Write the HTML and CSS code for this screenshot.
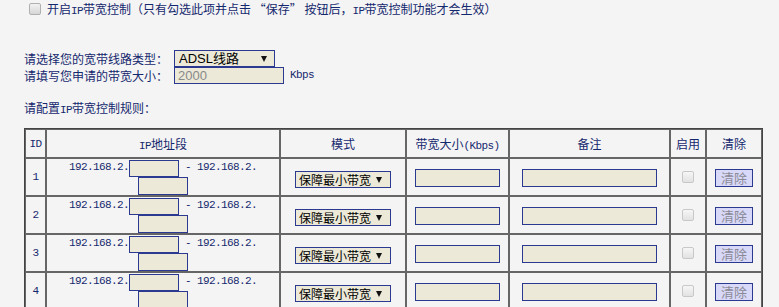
FILE: index.html
```html
<!DOCTYPE html>
<html lang="zh-CN">
<head>
<meta charset="utf-8">
<title>IP带宽控制</title>
<link rel="stylesheet" href="styles.css">
</head>
<body>
<div class="page">
  <div class="enable-row">
    <input type="checkbox" class="chk">
    <span>开启<span class="en">IP</span>带宽控制（只有勾选此项并点击 “保存” 按钮后，<span class="en">IP</span>带宽控制功能才会生效）</span>
  </div>

  <div class="line-form">
    <div class="lbl">请选择您的宽带线路类型：</div>
    <div class="sel sel-line"><select><option>ADSL线路</option></select><span class="arrow"></span></div>
    <div></div>
    <div class="lbl">请填写您申请的带宽大小：</div>
    <input class="field field-total" type="text" value="2000" disabled>
    <div class="unit en">Kbps</div>
  </div>

  <div class="section-title">请配置<span class="en">IP</span>带宽控制规则：</div>

  <table class="rules">
    <colgroup>
      <col class="c-id"><col class="c-ip"><col class="c-mode"><col class="c-bw"><col class="c-note"><col class="c-en"><col class="c-clr">
    </colgroup>
    <thead>
      <tr>
        <th class="en">ID</th>
        <th><span class="en">IP</span>地址段</th>
        <th>模式</th>
        <th>带宽大小<span class="en">(Kbps)</span></th>
        <th>备注</th>
        <th>启用</th>
        <th>清除</th>
      </tr>
    </thead>
    <tbody>
      <tr>
        <td class="en">1</td>
        <td class="ip-cell">
          <div class="ip-line"><span class="en">192.168.2.</span><input class="field ip-in" type="text"><span class="en">&nbsp;-&nbsp;192.168.2.</span></div>
          <div class="ip-line"><input class="field ip-in" type="text"></div>
        </td>
        <td><div class="sel sel-mode"><select><option>保障最小带宽</option></select><span class="arrow"></span></div></td>
        <td><input class="field bw-in" type="text"></td>
        <td><input class="field note-in" type="text"></td>
        <td><input type="checkbox" class="chk chk-dis" disabled></td>
        <td><button class="clr-btn" disabled>清除</button></td>
      </tr>
      <tr>
        <td class="en">2</td>
        <td class="ip-cell">
          <div class="ip-line"><span class="en">192.168.2.</span><input class="field ip-in" type="text"><span class="en">&nbsp;-&nbsp;192.168.2.</span></div>
          <div class="ip-line"><input class="field ip-in" type="text"></div>
        </td>
        <td><div class="sel sel-mode"><select><option>保障最小带宽</option></select><span class="arrow"></span></div></td>
        <td><input class="field bw-in" type="text"></td>
        <td><input class="field note-in" type="text"></td>
        <td><input type="checkbox" class="chk chk-dis" disabled></td>
        <td><button class="clr-btn" disabled>清除</button></td>
      </tr>
      <tr>
        <td class="en">3</td>
        <td class="ip-cell">
          <div class="ip-line"><span class="en">192.168.2.</span><input class="field ip-in" type="text"><span class="en">&nbsp;-&nbsp;192.168.2.</span></div>
          <div class="ip-line"><input class="field ip-in" type="text"></div>
        </td>
        <td><div class="sel sel-mode"><select><option>保障最小带宽</option></select><span class="arrow"></span></div></td>
        <td><input class="field bw-in" type="text"></td>
        <td><input class="field note-in" type="text"></td>
        <td><input type="checkbox" class="chk chk-dis" disabled></td>
        <td><button class="clr-btn" disabled>清除</button></td>
      </tr>
      <tr>
        <td class="en">4</td>
        <td class="ip-cell">
          <div class="ip-line"><span class="en">192.168.2.</span><input class="field ip-in" type="text"><span class="en">&nbsp;-&nbsp;192.168.2.</span></div>
          <div class="ip-line"><input class="field ip-in" type="text"></div>
        </td>
        <td><div class="sel sel-mode"><select><option>保障最小带宽</option></select><span class="arrow"></span></div></td>
        <td><input class="field bw-in" type="text"></td>
        <td><input class="field note-in" type="text"></td>
        <td><input type="checkbox" class="chk chk-dis" disabled></td>
        <td><button class="clr-btn" disabled>清除</button></td>
      </tr>
    </tbody>
  </table>
</div>
</body>
</html>
```

FILE: styles.css
```css
html, body {
  margin: 0;
  padding: 0;
  background: #f4f4f4;
}

body {
  font-family: "Noto Sans CJK SC", "Liberation Sans", sans-serif;
  font-size: 12px;
  color: #14286e;
}

.page {
  padding-left: 24px;
}

.en {
  font-family: "Liberation Mono", "DejaVu Sans Mono", monospace;
  font-size: 11px;
  letter-spacing: -0.6px;
}

.enable-row {
  height: 17px;
  display: flex;
  align-items: center;
  padding-left: 5px;
  white-space: nowrap;
}

.chk {
  -webkit-appearance: none;
  appearance: none;
  width: 12px;
  height: 12px;
  margin: 0 6px 0 0;
  border: 1px solid #b0b0b0;
  border-radius: 2px;
  background: linear-gradient(#f2f2f2, #d6d6d6);
  box-sizing: border-box;
}

.chk-dis {
  margin: 0;
  border-color: #c8c8c8;
  background: linear-gradient(#f6f6f6, #e2e2e2);
}

.line-form {
  margin-top: 33px;
  display: grid;
  grid-template-columns: 150px auto 1fr;
  grid-template-rows: 17px 17px;
  align-items: center;
}

.lbl {
  line-height: 17px;
}

.field {
  box-sizing: border-box;
  border: 1px solid #2b3990;
  background: #ece9d8;
  margin: 0;
  padding: 0 3px;
  font-family: "Liberation Sans", "Noto Sans CJK SC", sans-serif;
  font-size: 12px;
  color: #000;
  outline: none;
}

.field-total {
  width: 110px;
  height: 17px;
  color: #8a8a8a;
  font-size: 13px;
}

.unit {
  padding-left: 6px;
  line-height: 17px;
}

.sel {
  box-sizing: border-box;
  display: flex;
  align-items: center;
  border: 1px solid #2b3990;
  background: #ece9d8;
}

.sel select {
  -webkit-appearance: none;
  appearance: none;
  flex: 1;
  min-width: 0;
  border: 0;
  background: transparent;
  margin: 0;
  padding: 0 0 0 4px;
  font-family: "Liberation Sans", "Noto Sans CJK SC", sans-serif;
  font-size: 13px;
  color: #000;
  outline: none;
  height: 15px;
  line-height: 15px;
}

.arrow {
  width: 0;
  height: 0;
  border-left: 3px solid transparent;
  border-right: 3px solid transparent;
  border-top: 6px solid #111;
  margin-right: 7px;
}

.sel-line {
  width: 101px;
  height: 17px;
}

.sel-mode {
  width: 96px;
  height: 17px;
  margin: 5px auto 0;
}

.sel-mode select {
  font-family: "Noto Sans CJK SC", sans-serif;
  font-size: 12px;
  padding-left: 3px;
}

.sel-mode .arrow {
  margin-right: 8px;
}

.section-title {
  margin-top: 16px;
  line-height: 16px;
}

.rules {
  margin-top: 10px;
  border-collapse: separate;
  border-spacing: 0;
  border: 1px solid #444;
  table-layout: fixed;
  width: 739px;
}

.c-id { width: 21px; }
.c-ip { width: 234px; }
.c-mode { width: 126px; }
.c-bw { width: 103px; }
.c-note { width: 161px; }
.c-en { width: 36px; }
.c-clr { width: 56px; }

.rules th,
.rules td {
  border: 1px solid #666;
  padding: 0;
  text-align: center;
  vertical-align: middle;
  box-sizing: border-box;
}

.rules th {
  height: 29px;
  font-weight: normal;
}

.rules td {
  height: 38px;
}

.ip-line {
  height: 18px;
  display: flex;
  align-items: center;
  justify-content: center;
  white-space: nowrap;
}

.ip-line .en {
  margin-top: -3px;
}

.ip-in {
  width: 50px;
  height: 18px;
}

.ip-line:first-child .ip-in {
  height: 17px;
}

.bw-in {
  width: 85px;
  height: 18px;
  display: block;
  margin: 2px auto 0;
}

.note-in {
  width: 135px;
  height: 18px;
  display: block;
  margin: 2px auto 0;
}

.clr-btn {
  box-sizing: border-box;
  width: 38px;
  height: 18px;
  margin: 2px 0 0;
  padding: 0;
  border: 1px solid #2b3990;
  background: #d8d8f8;
  color: #8a8a96;
  font-family: "Noto Sans CJK SC", sans-serif;
  font-size: 13px;
  line-height: 16px;
}
```
